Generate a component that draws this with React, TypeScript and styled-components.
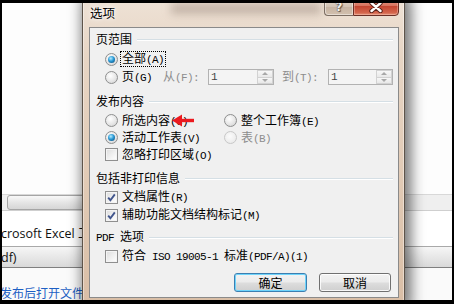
import styled, { createGlobalStyle } from "styled-components";

const Global = createGlobalStyle`
  html, body {
    margin: 0;
    padding: 0;
    background: #000;
  }
  body {
    width: 454px;
    height: 304px;
    overflow: hidden;
  }
`;

/* splits a label into CJK runs and half-width runs (SimSun style: 6px per latin char) */
function Txt({ s }: { s: string }) {
  const parts = s.split(/([\x20-\x7e]+)/).filter(Boolean);
  return (
    <>
      {parts.map((p, i) =>
        /^[\x20-\x7e]+$/.test(p) ? <Lat key={i}>{p}</Lat> : <span key={i}>{p}</span>
      )}
    </>
  );
}

function Header({ s, mt }: { s: string; mt: number }) {
  return (
    <GroupHeader $mt={mt}>
      <GroupLabel>
        <Txt s={s} />
      </GroupLabel>
      <Rule />
    </GroupHeader>
  );
}

export default function App() {
  return (
    <Screen>
      <Global />
      <Backdrop>
        <BlankTop />
        <ToolStrip>
          <StripButton />
        </ToolStrip>
        <FieldRow>
          <FieldText>crosoft Excel 工作簿</FieldText>
        </FieldRow>
        <TypeBar>
          <FieldText>df)</FieldText>
        </TypeBar>
        <LinkRow>
          <LinkText>发布后打开文件(E)</LinkText>
        </LinkRow>
      </Backdrop>

      <Window>
        <TitleBar>
          <GlassSmudge />
          <Title>选项</Title>
          <Caption>
            <HelpButton>?</HelpButton>
            <CloseButton>
              <svg width="16" height="12" viewBox="0 0 16 12">
                <path d="M3.5 2 L12.5 10 M12.5 2 L3.5 10" stroke="#5a2118" strokeWidth="4.4" strokeLinecap="round" />
                <path d="M3.5 2 L12.5 10 M12.5 2 L3.5 10" stroke="#ffffff" strokeWidth="2.4" strokeLinecap="round" />
              </svg>
            </CloseButton>
          </Caption>
        </TitleBar>

        <Client>
          <Header s="页范围" mt={0} />
          <GroupBody $mt={4}>
            <Option $h={18}>
              <Radio $checked />
              <Focus>
                <Txt s="全部(A)" />
              </Focus>
            </Option>
            <Option $h={18}>
              <Radio />
              <Label>
                <Txt s="页(G)" />
              </Label>
              <RangeLabel $ml={11}>
                <Txt s="从(F):" />
              </RangeLabel>
              <SpinBox $w={66} $ml={9}>
                <SpinValue>1</SpinValue>
                <SpinButtons>
                  <SpinHalf />
                  <SpinHalf $down />
                </SpinButtons>
              </SpinBox>
              <RangeLabel $ml={8}>
                <Txt s="到(T):" />
              </RangeLabel>
              <SpinBox $w={65} $ml={10}>
                <SpinValue>1</SpinValue>
                <SpinButtons>
                  <SpinHalf />
                  <SpinHalf $down />
                </SpinButtons>
              </SpinBox>
            </Option>
          </GroupBody>

          <Header s="发布内容" mt={8} />
          <Columns>
            <Option $h={17}>
              <Radio />
              <Label>
                <Txt s="所选内容(C)" />
              </Label>
              <Arrow width="22" height="13" viewBox="0 0 22 13">
                <polygon points="0,6.5 10,0.5 10,12.5" fill="#ec1a1f" />
                <rect x="9" y="4.8" width="13" height="3.4" fill="#ec1a1f" />
              </Arrow>
            </Option>
            <Option $h={17}>
              <Radio />
              <Label>
                <Txt s="整个工作簿(E)" />
              </Label>
            </Option>
            <Option $h={17}>
              <Radio $checked />
              <Label>
                <Txt s="活动工作表(V)" />
              </Label>
            </Option>
            <Option $h={17}>
              <Radio $disabled />
              <Label $disabled>
                <Txt s="表(B)" />
              </Label>
            </Option>
            <Option $h={17}>
              <Check />
              <Label>
                <Txt s="忽略打印区域(O)" />
              </Label>
            </Option>
          </Columns>

          <Header s="包括非打印信息" mt={8} />
          <GroupBody $mt={3}>
            <Option $h={18}>
              <Check $checked>
                <Tick />
              </Check>
              <Label>
                <Txt s="文档属性(R)" />
              </Label>
            </Option>
            <Option $h={18}>
              <Check $checked>
                <Tick />
              </Check>
              <Label>
                <Txt s="辅助功能文档结构标记(M)" />
              </Label>
            </Option>
          </GroupBody>

          <Header s="PDF 选项" mt={6} />
          <GroupBody $mt={3}>
            <Option $h={18}>
              <Check />
              <Label>
                <Txt s="符合 ISO 19005-1 标准(PDF/A)(1)" />
              </Label>
            </Option>
          </GroupBody>

          <ButtonRow>
            <DialogButton $w={73} $default>
              确定
            </DialogButton>
            <DialogButton $w={72}>取消</DialogButton>
          </ButtonRow>
        </Client>
      </Window>
    </Screen>
  );
}

function Tick() {
  return (
    <svg width="11" height="11" viewBox="0 0 11 11">
      <path d="M2.2 5.6 L4.4 8.2 L8.8 2.4" fill="none" stroke="#41558c" strokeWidth="1.9" />
    </svg>
  );
}

const Screen = styled.div`
  position: relative;
  width: 454px;
  height: 304px;
  box-sizing: border-box;
  border-style: solid;
  border-color: #000;
  border-width: 3px 2px 4px 2px;
  overflow: hidden;
  background: #fdfdfd;
  font-family: "Noto Sans CJK SC", sans-serif;
`;

/* the publish dialog lying behind */
const Backdrop = styled.div`
  display: flex;
  flex-direction: column;
  height: 100%;
`;

const BlankTop = styled.div`
  height: 191px;
  flex: none;
`;

const ToolStrip = styled.div`
  flex: none;
  height: 15px;
  background: #efefef;
  border-top: 1px solid #d8d8d8;
  border-bottom: 1px solid #cfcfcf;
  padding-left: 5px;
  display: flex;
  align-items: center;
`;

const StripButton = styled.div`
  width: 300px;
  height: 13px;
  border: 1px solid #a5a5a5;
  border-radius: 3px;
  background: linear-gradient(#f8f8f8, #e2e2e2 60%, #d6d6d6);
`;

const FieldRow = styled.div`
  flex: none;
  height: 36px;
  background: #ffffff;
  border-bottom: 1px solid #a9a9a9;
  display: flex;
  align-items: center;
  padding-top: 8px;
  box-sizing: border-box;
`;

const FieldText = styled.span`
  font-family: "Open Sans", "Noto Sans CJK SC", sans-serif;
  font-size: 12.5px;
  color: #111;
  white-space: nowrap;
  margin-left: -1px;
`;

const TypeBar = styled.div`
  flex: none;
  height: 20px;
  background: linear-gradient(#f6f6f6, #e6e6e6 55%, #d9d9d9);
  border-bottom: 1px solid #7f7f7f;
  display: flex;
  align-items: center;
`;

const LinkRow = styled.div`
  flex: 1;
  background: #fafafa;
  padding-top: 11px;
`;

const LinkText = styled.span`
  font-size: 12px;
  color: #1d5fc4;
  white-space: nowrap;
  margin-left: -2px;
`;

/* the options window, a window on the desktop */
const Window = styled.div`
  position: absolute;
  left: 80px;
  top: -7px;
  width: 323px;
  height: 309px;
  box-sizing: border-box;
  border: 1px solid #5e544a;
  border-radius: 6px 6px 0 0;
  background: linear-gradient(180deg, #eee2d6 0%, #e7d5c4 20%, #e1cab5 60%, #d9bea6 100%);
  box-shadow: 3px 2px 14px 3px rgba(0, 0, 0, 0.55), inset 0 0 0 1px rgba(255, 255, 255, 0.4);
  padding: 0 5px 0 6px;
  display: flex;
  flex-direction: column;
`;

const TitleBar = styled.div`
  position: relative;
  height: 30px;
  flex: none;
  display: flex;
  align-items: center;
  padding-left: 1px;
`;

const GlassSmudge = styled.div`
  position: absolute;
  left: 82px;
  top: 6px;
  width: 150px;
  height: 11px;
  background: rgba(120, 100, 88, 0.35);
  filter: blur(4px);
`;

const Title = styled.span`
  position: relative;
  font-size: 12.5px;
  color: #000;
  text-shadow: 0 0 6px rgba(255, 255, 255, 0.95), 0 0 3px rgba(255, 255, 255, 0.9);
`;

const Caption = styled.div`
  margin-left: auto;
  align-self: flex-start;
  display: flex;
  position: relative;
`;

const HelpButton = styled.div`
  width: 29px;
  height: 19px;
  box-sizing: border-box;
  border: 1px solid #7b6d62;
  border-right: none;
  border-radius: 0 0 0 4px;
  background: linear-gradient(#e6d9cd, #d3c3b4 50%, #c6b3a2 51%, #d2c0ae);
  box-shadow: inset 0 0 0 1px rgba(255, 255, 255, 0.45);
  display: flex;
  align-items: flex-end;
  justify-content: center;
  padding-bottom: 1px;
  font-family: "DejaVu Sans", sans-serif;
  font-weight: bold;
  font-size: 12px;
  line-height: 14px;
  color: #f4f0ec;
  text-shadow: 0 0 1px #5a4c42, 0 0 1px #5a4c42, 1px 1px 1px #6a5a4e;
`;

const CloseButton = styled.div`
  width: 46px;
  height: 19px;
  box-sizing: border-box;
  border: 1px solid #6a2f25;
  border-radius: 0 0 4px 0;
  background: linear-gradient(#e9a593, #d8735e 45%, #c44631 50%, #d3644b 85%, #e39076);
  box-shadow: inset 0 0 0 1px rgba(255, 220, 210, 0.35);
  display: flex;
  align-items: flex-end;
  justify-content: center;
  padding-bottom: 2px;
`;

const Client = styled.div`
  flex: none;
  height: 271px;
  box-sizing: border-box;
  border: 1px solid #8a8a8a;
  background: #f0f0f0;
  padding: 4px 5px 0 6px;
  display: flex;
  flex-direction: column;
  font-size: 12px;
  line-height: 14px;
  color: #000;
`;

const Lat = styled.span`
  font-family: "Liberation Mono", monospace;
  font-size: 11px;
  letter-spacing: -0.6px;
  white-space: pre;
`;

const GroupHeader = styled.div<{ $mt: number }>`
  margin-top: ${(p) => p.$mt}px;
  height: 14px;
  display: flex;
  align-items: center;
  gap: 5px;
`;

const GroupLabel = styled.span`
  white-space: nowrap;
`;

const Rule = styled.div`
  flex: 1;
  height: 1px;
  background: #d5dfe5;
  box-shadow: 0 1px 0 #ffffff;
`;

const GroupBody = styled.div<{ $mt: number }>`
  margin-top: ${(p) => p.$mt}px;
  margin-left: 9px;
  display: flex;
  flex-direction: column;
`;

const Columns = styled.div`
  margin-top: 4px;
  margin-left: 9px;
  display: grid;
  grid-template-columns: 119px 1fr;
`;

const Option = styled.div<{ $h: number }>`
  position: relative;
  height: ${(p) => p.$h}px;
  display: flex;
  align-items: center;
  white-space: nowrap;
`;

const Radio = styled.span<{ $checked?: boolean; $disabled?: boolean }>`
  position: relative;
  flex: none;
  width: 13px;
  height: 13px;
  box-sizing: border-box;
  border-radius: 50%;
  border: 1px solid ${(p) => (p.$disabled ? "#c8c8c8" : "#8e8f8f")};
  background: ${(p) =>
    p.$disabled
      ? "radial-gradient(circle at 45% 40%, #fbfbfb, #ececec 70%)"
      : "radial-gradient(circle at 40% 35%, #ffffff, #e4e4e4 60%, #c9c9c9)"};
  margin-right: 4px;

  &::after {
    content: "";
    display: ${(p) => (p.$checked ? "block" : "none")};
    position: absolute;
    left: 2px;
    top: 2px;
    width: 7px;
    height: 7px;
    border-radius: 50%;
    background: radial-gradient(circle at 40% 35%, #b6ecff, #2b9ad6 45%, #0c4f7e 90%);
  }
`;

const Check = styled.span<{ $checked?: boolean }>`
  flex: none;
  width: 13px;
  height: 13px;
  box-sizing: border-box;
  border: 1px solid #8f8f8f;
  background: linear-gradient(135deg, #dcdcdc, #f6f6f6 70%, #ffffff);
  box-shadow: inset 0 0 0 1px #f4f4f4;
  margin-right: 4px;
  display: flex;
  align-items: center;
  justify-content: center;
`;

const Label = styled.span<{ $disabled?: boolean }>`
  color: ${(p) => (p.$disabled ? "#8d8d8d" : "#000")};
`;

const Focus = styled.span`
  border: 1px dotted #000;
  padding: 0 1px;
  margin-left: -2px;
  line-height: 12px;
`;

const RangeLabel = styled.span<{ $ml: number }>`
  margin-left: ${(p) => p.$ml}px;
  color: #8d8d8d;
`;

const SpinBox = styled.div<{ $w: number; $ml: number }>`
  margin-left: ${(p) => p.$ml}px;
  width: ${(p) => p.$w}px;
  height: 16px;
  box-sizing: border-box;
  border: 1px solid #b2b2b2;
  background: #f4f4f4;
  display: flex;
`;

const SpinValue = styled.span`
  flex: 1;
  padding-left: 2px;
  font-family: "Liberation Mono", monospace;
  font-size: 11px;
  line-height: 14px;
  color: #444;
`;

const SpinButtons = styled.div`
  width: 16px;
  display: flex;
  flex-direction: column;
`;

const SpinHalf = styled.div<{ $down?: boolean }>`
  flex: 1;
  box-sizing: border-box;
  border: 1px solid #d2d2d2;
  ${(p) => (p.$down ? "border-top: none;" : "")}
  background: linear-gradient(#f7f7f7, #e8e8e8);
  display: flex;
  align-items: center;
  justify-content: center;

  &::after {
    content: "";
    width: 0;
    height: 0;
    border-left: 3px solid transparent;
    border-right: 3px solid transparent;
    ${(p) => (p.$down ? "border-top: 3px solid #a8a8a8;" : "border-bottom: 3px solid #a8a8a8;")}
  }
`;

const Arrow = styled.svg`
  position: absolute;
  left: 67px;
  top: 2px;
`;

const ButtonRow = styled.div`
  margin-top: 8px;
  padding-right: 2px;
  display: flex;
  justify-content: flex-end;
  gap: 12px;
`;

const DialogButton = styled.button<{ $w: number; $default?: boolean }>`
  width: ${(p) => p.$w}px;
  height: 19px;
  padding: 0;
  border-radius: 3px;
  border: 1px solid ${(p) => (p.$default ? "#3c7fb1" : "#707070")};
  background: linear-gradient(#f3f3f3, #ebebeb 48%, #dddddd 52%, #cfcfcf);
  box-shadow: inset 0 0 0 1px ${(p) => (p.$default ? "#6fd4fb" : "rgba(255, 255, 255, 0.85)")};
  font-family: "Noto Sans CJK SC", sans-serif;
  font-size: 12px;
  line-height: 16px;
  color: #000;
`;
